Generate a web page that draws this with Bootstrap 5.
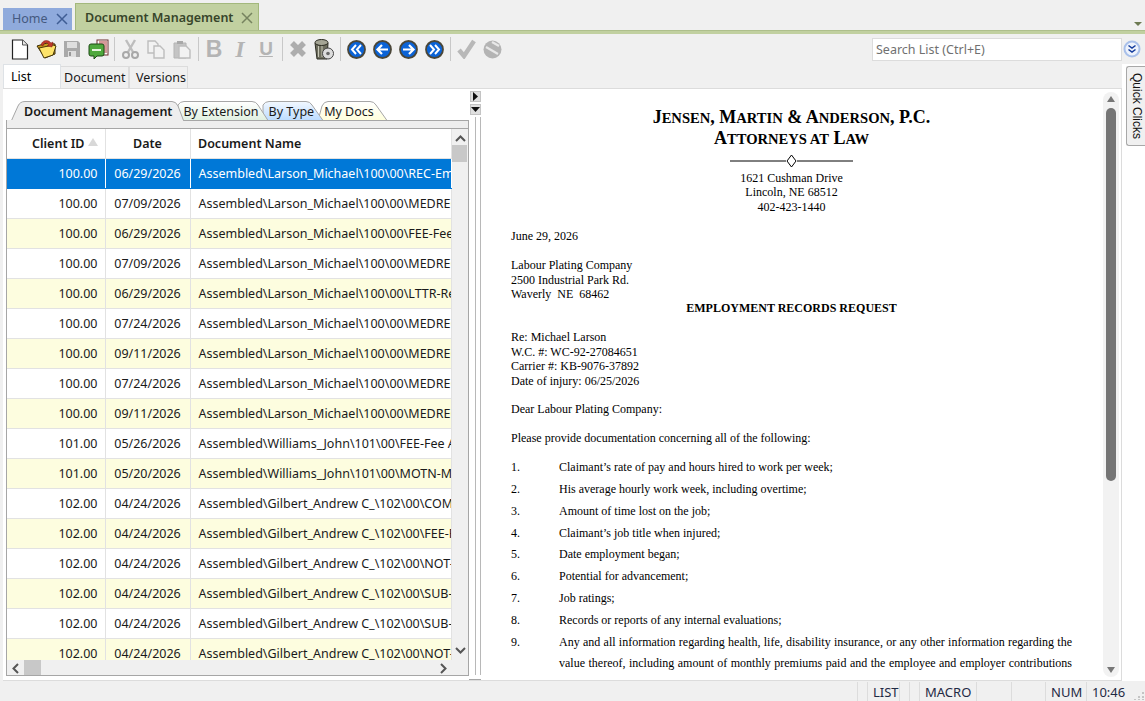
<!DOCTYPE html>
<html lang="en">

<head>
    <meta charset="UTF-8">
    <meta name="viewport" content="width=device-width, initial-scale=1.0">
    <title>Document Management</title>

    <link href="https://cdn.jsdelivr.net/npm/bootstrap@5.3.0/dist/css/bootstrap.min.css" rel="stylesheet">

    <style>
        html, body { height: 100%; }

        body {
            background-color: #f0f0f0;
            font-family: "Noto Sans", "Open Sans", sans-serif;
            font-size: 12.5px;
            color: #1a1a1a;
            overflow: hidden;
        }

        /* top window tabs */
        .top-tabs { height: 30px; padding-left: 3px; }
        .top-tab { display: flex; align-items: center; height: 22px; padding-left: 9px; width: 69px; flex: none; white-space: nowrap; background-color: #8faadc; color: #44597f; }
        .top-tab svg { margin-left: 8px; flex: none; }
        .top-tab.active { height: 27px; width: 184px; margin-left: 3px; padding-top: 2px; background-color: #c1d0a0; border: 1px solid #a3b87c; border-bottom: 0; color: #37452a; font-weight: 600; }
        .top-rule { height: 4px; background-color: #c1d0a0; border-top: 1px solid #aebf8c; }
        .tab-menu { width: 0; height: 0; margin: 0 3px 4px 0; border-left: 4px solid transparent; border-right: 4px solid transparent; border-top: 4px solid #6d7a52; }

        /* toolbar */
        .toolbar { height: 30px; padding-left: 7px; }
        .tool { width: 26px; height: 26px; flex: none; display: flex; align-items: center; justify-content: center; }
        .tool.glyph { font-family: "Liberation Sans", sans-serif; font-size: 23px; font-weight: 700; color: #b4b4b4; }
        .tool.glyph.u { text-decoration: underline; font-size: 19px; }
        .tool.glyph.i { font-family: "Liberation Serif", serif; font-style: italic; font-size: 24px; }
        .sep { width: 1px; height: 24px; flex: none; margin: 0 2px 0 3px; background-color: #c8c8c8; }
        .search-box { width: 250px; height: 23px; flex: none; margin-right: 23px; padding: 0 3px; border-radius: 0; border: 1px solid #dcdcdc; font-size: 12.5px; font-family: inherit; }
        .search-box::placeholder { color: #707070; }
        .search-more { position: absolute; right: 4px; top: 6px; }

        /* List / Document / Versions */
        .sub-tabs { height: 24px; padding-left: 3px; border: 0; gap: 0; }
        .sub-tabs .nav-link { height: 22px; margin: 2px 0 0 0; padding: 0 0 0 3px; line-height: 21px; color: #1a1a1a; background-color: #f0f0f0; border: 1px solid #dcdcdc; border-bottom: 0; border-radius: 0; }
        .sub-tabs .nav-link.active { height: 24px; width: 58px; margin-top: 0; padding: 0 0 0 7px; line-height: 23px; background-color: #fff; }
        .sub-tabs .nav-item + .nav-item .nav-link { border-left: 0; }
        .sub-tabs .nav-item:nth-child(2) .nav-link { width: 68px; }
        .sub-tabs .nav-item:nth-child(3) .nav-link { width: 59px; padding-left: 6px; border-left: 1px solid #dcdcdc; }

        .workspace { height: 617px; }
        .main-pane { height: 593px; margin-left: 3px; width: 1119px; background-color: #fff; border-top: 1px solid #dcdcdc; border-bottom: 1px solid #dcdcdc; border-right: 1px solid #dcdcdc; }
        .right-rail { width: 23px; background-color: #fff; padding: 2px 0 0 4px; }
        .quick-clicks { height: 80px; width: 19px; writing-mode: vertical-rl; background-color: #f0f0f0; border: 1px solid #a8a8a8; border-right: 0; border-radius: 3px 0 0 3px; font-family: "Liberation Sans", sans-serif; font-size: 12px; line-height: 17px; text-align: center; color: #111; }

        /* left list pane */
        .list-pane { width: 463px; margin-left: 3px; padding-top: 12px; }
        .doc-strip { position: relative; height: 19px; padding-left: 18px; gap: 10px; }
        .doc-strip svg { position: absolute; left: 0; top: 0; }
        .doc-strip span { position: relative; line-height: 21px; white-space: nowrap; }
        .doc-strip .on { font-weight: 600; margin-right: 1px; }
        .strip-band { height: 8px; background-color: #eee; border: 1px solid #a6a6a6; border-width: 1px 1px 0 1px; }
        .grid-frame { height: 548px; border: 1px solid #a6a6a6; }
        .grid-view { width: 445px; height: 531px; overflow: hidden; }
        .grid { table-layout: fixed; width: 445px; margin: 0; border-color: #e2e2e2; font-size: 12.5px; }
        .grid th, .grid td { height: 30px; padding: 2px 7px 0; vertical-align: middle; white-space: nowrap; overflow: hidden; color: #1a1a1a; border-width: 0 1px 1px 0; border-color: #e2e2e2; }
        .grid td:nth-child(3) { padding-left: 8px; }
        .grid th:nth-child(3) { padding-left: 7.5px; }
        .grid th { height: 29px; font-weight: 600; }
        .grid .sort { display: inline-block; width: 0; height: 0; margin-left: 3px; vertical-align: 2px; border-left: 5px solid transparent; border-right: 5px solid transparent; border-bottom: 8px solid #d8d8d8; }
        .grid tr.alt td { background-color: #fdfddf; }
        .grid tr.sel td { background-color: #0078d7; color: #fff; border-color: #fff; border-bottom-color: #0078d7; }
        .vbar { width: 16px; background-color: #f0f0f0; padding-top: 16px; }
        .vbar i { display: block; width: 15px; height: 17px; background-color: #c8c8c8; }
        .hbar { height: 16px; background-color: #f0f0f0; padding-left: 17px; }
        .hbar i { display: block; width: 17px; height: 15px; background-color: #c8c8c8; }
        .hbar svg, .vbar svg { position: absolute; }

        /* splitter between list and preview */
        .splitter { position: relative; width: 12px; border-bottom: 1px solid #a6a6a6; padding-top: 2px; }
        .split-btn { display: flex; align-items: center; justify-content: center; width: 11px; height: 11px; margin: 0 0 2px 1px; background-color: #e0e0e0; border: 1px solid #c4c4c4; }
        .split-lines { width: 6px; height: 558px; margin-left: 6px; border: 1px solid #b8b8b8; border-width: 0 1px; }

        /* letter preview */
        .preview { flex: 1; padding: 18px 0 0 30px; overflow: hidden; height: 591px; font-family: "Liberation Serif", serif; font-size: 12px; line-height: 14.5px; color: #000; }
        .letter { width: 561px; flex: none; }
        .letter p { margin: 0 0 14.25px; }
        .firm { font-size: 18px; line-height: 20px; font-weight: 700; text-align: center; white-space: nowrap; }
        .firm span { font-size: .81em; text-transform: uppercase; }
        .firm-rule { display: block; margin: 4px auto 1.75px; }
        .letter .address { margin-bottom: 15px; }
        .letter .heading { margin-top: -.5px; margin-bottom: 14.75px; }
        .letter .dear { margin-top: -.5px; margin-bottom: 14.75px; }
        .letter ol { list-style: none; margin: 11.5px 0 0; padding: 0; line-height: 21.8px; }
        .letter li { display: flex; }
        .letter li span { width: 48px; flex: none; }
        .letter li div { width: 513px; text-align: justify; text-align-last: justify; }
        .doc-scroll { position: relative; width: 16px; height: 585px; margin: -15.5px 0 0 31px; background-color: #f2f2f2; border-radius: 8px; flex: none; }
        .doc-scroll .thumb { position: absolute; left: 3px; top: 16px; width: 10px; height: 373px; background-color: #757575; border-radius: 5px; }
        .doc-scroll svg { position: absolute; left: 4px; }

        /* status bar */
        .status-bar { height: 20px; justify-content: flex-end; padding-top: 1px; color: #1f2a44; font-size: 13px; position: relative; }
        .status-bar div { height: 19px; line-height: 21px; padding-left: 5px; border-left: 1px solid #dcdcdc; }
        .status-bar svg { position: absolute; right: 1px; bottom: 1px; }
    </style>
</head>

<body class="d-flex flex-column">

    <div class="top-tabs d-flex align-items-end">
        <div class="top-tab">Home
            <svg width="12" height="12" viewBox="0 0 12 12"><path d="M1 1l10 10M11 1L1 11" stroke="#3f5d94" stroke-width="1.5" fill="none"/></svg>
        </div>
        <div class="top-tab active">Document Management
            <svg width="12" height="12" viewBox="0 0 12 12"><path d="M1 1l10 10M11 1L1 11" stroke="#76835f" stroke-width="1.5" fill="none"/></svg>
        </div>
        <div class="ms-auto tab-menu"></div>
    </div>
    <div class="top-rule"></div>

    <div class="toolbar d-flex align-items-center position-relative">
        <span class="tool"><svg width="18" height="21" viewBox="0 0 18 21"><path d="M1.500 1h10l5 5v14h-15z" fill="#fff" stroke="#222" stroke-width="1.2"/><path d="M11.500 1v5h5" fill="#e8e8e8" stroke="#555"/></svg></span>
        <span class="tool"><svg width="21" height="20" viewBox="0 0 21 20"><path d="M1 7l10-3 8 1v10l-10 4z" fill="#c79a1e" stroke="#3a2c08"/><path d="M3 9l14-3 3 1-3 9-9 3z" fill="#fde36a" stroke="#4a3a0a"/><path d="M5 6C6 1 12 0 15 4l2-1-1 5-5-1 2-1C11 3 8 3 7 7z" fill="#c0392b" stroke="#7a1c12" stroke-width=".5"/></svg></span>
        <span class="tool"><svg width="18" height="18" viewBox="0 0 18 18"><path d="M1 1h14l2 2v14H1z" fill="#a9a9a9"/><rect x="4" y="2" width="10" height="6" fill="#dedede"/><rect x="5" y="11" width="8" height="6" fill="#dedede"/><rect x="6" y="12" width="2" height="4" fill="#999"/></svg></span>
        <span class="tool"><svg width="21" height="21" viewBox="0 0 21 21"><rect x="9" y="1" width="11" height="15" fill="#fff" stroke="#6b2c2c"/><path d="M11 3h8M11 5h8M11 7h8M11 9h8M11 11h8M11 13h8" stroke="#a33"/><path d="M3 5h11a2 2 0 0 1 2 2v8a2 2 0 0 1-2 2H9l-3 3v-3H3a2 2 0 0 1-2-2V7a2 2 0 0 1 2-2z" fill="#4fa83d" stroke="#1d4a15"/><rect x="4" y="10" width="9" height="2" fill="#e8f5e0"/></svg></span>
        <span class="sep"></span>
        <span class="tool"><svg width="17" height="20" viewBox="0 0 17 20"><path d="M4 1l7 12M13 1L6 13" stroke="#bdbdbd" stroke-width="2.400" fill="none"/><circle cx="4" cy="16" r="3" fill="none" stroke="#a8a8a8" stroke-width="2"/><circle cx="13" cy="16" r="3" fill="none" stroke="#a8a8a8" stroke-width="2"/></svg></span>
        <span class="tool"><svg width="18" height="19" viewBox="0 0 18 19"><path d="M1 1h7l3 3v9H1z" fill="#f2f2f2" stroke="#bdbdbd" stroke-width="1.400"/><path d="M7 6h6l4 4v8H7z" fill="#f2f2f2" stroke="#bdbdbd" stroke-width="1.400"/></svg></span>
        <span class="tool"><svg width="18" height="19" viewBox="0 0 18 19"><path d="M1 3h12v15H1z" fill="#c4c4c4" stroke="#b4b4b4"/><rect x="4" y="1" width="6" height="3" fill="#a8a8a8"/><path d="M6 6h7l4 4v8H6z" fill="#f2f2f2" stroke="#bdbdbd" stroke-width="1.400"/></svg></span>
        <span class="sep"></span>
        <span class="tool glyph">B</span>
        <span class="tool glyph i">I</span>
        <span class="tool glyph u">U</span>
        <span class="sep"></span>
        <span class="tool"><svg width="18" height="18" viewBox="0 0 18 18"><path d="M3 3l12 12M15 3L3 15" stroke="#adadad" stroke-width="5.500" fill="none"/></svg></span>
        <span class="tool"><svg width="20" height="21" viewBox="0 0 20 21"><path d="M1 4h13l-1 16H3z" fill="#6e6e5e" stroke="#2c2c22"/><ellipse cx="7.500" cy="3.500" rx="6.500" ry="3" fill="#a5a595" stroke="#2c2c22"/><path d="M4.500 7v11M8 7v11" stroke="#c8c8b8"/><circle cx="14" cy="14.500" r="5.500" fill="#dcdcdc" stroke="#444"/><circle cx="14" cy="14.500" r="1.800" fill="#666"/></svg></span>
        <span class="sep"></span>
        <span class="tool"><svg width="19" height="19" viewBox="0 0 19 19"><circle cx="9.500" cy="9.500" r="8.500" fill="#0b63d6" stroke="#4a4638" stroke-width="1.800"/><path d="M9 5L5 9.500 9 14M14 5l-4 4.500 4 4.500" fill="none" stroke="#fff" stroke-width="2"/></svg></span>
        <span class="tool"><svg width="19" height="19" viewBox="0 0 19 19"><circle cx="9.500" cy="9.500" r="8.500" fill="#0b63d6" stroke="#4a4638" stroke-width="1.800"/><path d="M9 5L4.500 9.500 9 14M5 9.500h10" fill="none" stroke="#fff" stroke-width="2.200"/></svg></span>
        <span class="tool"><svg width="19" height="19" viewBox="0 0 19 19"><circle cx="9.500" cy="9.500" r="8.500" fill="#0b63d6" stroke="#4a4638" stroke-width="1.800"/><path d="M10 5l4.500 4.500L10 14M4 9.500h10" fill="none" stroke="#fff" stroke-width="2.200"/></svg></span>
        <span class="tool"><svg width="19" height="19" viewBox="0 0 19 19"><circle cx="9.500" cy="9.500" r="8.500" fill="#0b63d6" stroke="#4a4638" stroke-width="1.800"/><path d="M5 5l4 4.500L5 14M10 5l4 4.500-4 4.500" fill="none" stroke="#fff" stroke-width="2"/></svg></span>
        <span class="sep"></span>
        <span class="tool"><svg width="19" height="20" viewBox="0 0 19 20"><path d="M2 11l5 6L17 2" fill="none" stroke="#b8b8b8" stroke-width="4.500"/></svg></span>
        <span class="tool"><svg width="19" height="19" viewBox="0 0 19 19"><circle cx="9.500" cy="9.500" r="9" fill="#b4b4b4"/><path d="M3 7l12 7M9 2l7 4" stroke="#e8e8e8" stroke-width="2.200" fill="none"/></svg></span>
        <input type="text" class="form-control search-box ms-auto" placeholder="Search List (Ctrl+E)">
        <svg class="search-more" width="18" height="18" viewBox="0 0 18 18"><circle cx="9" cy="9" r="7.500" fill="#eef3fc" stroke="#a9c0ea" stroke-width="2"/><path d="M5.500 5.500L9 8l3.500-2.500M5.500 9.500L9 12l3.500-2.500" fill="none" stroke="#123a9c" stroke-width="1.500"/></svg>
    </div>

    <div class="workspace d-flex">
        <div>
            <ul class="nav nav-tabs sub-tabs">
                <li class="nav-item"><a class="nav-link active" href="#">List</a></li>
                <li class="nav-item"><a class="nav-link" href="#">Document</a></li>
                <li class="nav-item"><a class="nav-link" href="#">Versions</a></li>
            </ul>

            <div class="main-pane d-flex">

                <div class="list-pane">
                    <div class="doc-strip d-flex">
                        <svg width="463" height="20" viewBox="0 0 463 20">
                            <defs>
                                <linearGradient id="tabGreen" x1="0" y1="0" x2="0" y2="1"><stop offset="0" stop-color="#fff"/><stop offset="1" stop-color="#e0f0e0"/></linearGradient>
                                <linearGradient id="tabBlue" x1="0" y1="0" x2="0" y2="1"><stop offset="0" stop-color="#f2f8ff"/><stop offset="1" stop-color="#bcdcff"/></linearGradient>
                                <linearGradient id="tabYellow" x1="0" y1="0" x2="0" y2="1"><stop offset="0" stop-color="#fff"/><stop offset="1" stop-color="#ffffdc"/></linearGradient>
                            </defs>
                            <path d="M312 19.500L316 5Q318 .5 322 .5H364Q368 .5 370 4L381 19.500z" fill="url(#tabYellow)" stroke="#a6a6a6"/>
                            <path d="M257 19.500V4Q259 .5 263 .5H300Q304 .5 306 4L317 19.500z" fill="url(#tabBlue)" stroke="#a6a6a6"/>
                            <path d="M172 19.500V4Q174 .5 178 .5H246Q250 .5 252 4L262 19.500z" fill="url(#tabGreen)" stroke="#a6a6a6"/>
                            <path d="M0 20V19.500H5.500L12 5Q14 .5 19 .5H166Q170 .5 172 5L177.500 19.500V20z" fill="#eee" stroke="#a6a6a6"/>
                            <rect x="1" y="19" width="176" height="2" fill="#eee"/>
                        </svg>
                        <span class="on">Document Management</span>
                        <span>By Extension</span>
                        <span>By Type</span>
                        <span>My Docs</span>
                    </div>
                    <div class="strip-band"></div>
                    <div class="grid-frame d-flex flex-column">
                        <div class="d-flex">
                            <div class="grid-view">
                                <table class="table grid">
                                    <colgroup><col style="width:98px"><col style="width:85px"><col></colgroup>
                                    <thead>
                                        <tr><th class="text-end">Client ID<span class="sort"></span></th><th class="text-center">Date</th><th>Document Name</th></tr>
                                    </thead>
                                    <tbody>
                                        <tr class="sel"><td class="text-end">100.00</td><td class="text-center">06/29/2026</td><td>Assembled\Larson_Michael\100\00\REC-Emp</td></tr>
                                        <tr><td class="text-end">100.00</td><td class="text-center">07/09/2026</td><td>Assembled\Larson_Michael\100\00\MEDREC</td></tr>
                                        <tr class="alt"><td class="text-end">100.00</td><td class="text-center">06/29/2026</td><td>Assembled\Larson_Michael\100\00\FEE-Fee</td></tr>
                                        <tr><td class="text-end">100.00</td><td class="text-center">07/09/2026</td><td>Assembled\Larson_Michael\100\00\MEDREC</td></tr>
                                        <tr class="alt"><td class="text-end">100.00</td><td class="text-center">06/29/2026</td><td>Assembled\Larson_Michael\100\00\LTTR-Re</td></tr>
                                        <tr><td class="text-end">100.00</td><td class="text-center">07/24/2026</td><td>Assembled\Larson_Michael\100\00\MEDREC</td></tr>
                                        <tr class="alt"><td class="text-end">100.00</td><td class="text-center">09/11/2026</td><td>Assembled\Larson_Michael\100\00\MEDREC</td></tr>
                                        <tr><td class="text-end">100.00</td><td class="text-center">07/24/2026</td><td>Assembled\Larson_Michael\100\00\MEDREC</td></tr>
                                        <tr class="alt"><td class="text-end">100.00</td><td class="text-center">09/11/2026</td><td>Assembled\Larson_Michael\100\00\MEDREC</td></tr>
                                        <tr><td class="text-end">101.00</td><td class="text-center">05/26/2026</td><td>Assembled\Williams_John\101\00\FEE-Fee A</td></tr>
                                        <tr class="alt"><td class="text-end">101.00</td><td class="text-center">05/20/2026</td><td>Assembled\Williams_John\101\00\MOTN-M</td></tr>
                                        <tr><td class="text-end">102.00</td><td class="text-center">04/24/2026</td><td>Assembled\Gilbert_Andrew C_\102\00\COMP</td></tr>
                                        <tr class="alt"><td class="text-end">102.00</td><td class="text-center">04/24/2026</td><td>Assembled\Gilbert_Andrew C_\102\00\FEE-F</td></tr>
                                        <tr><td class="text-end">102.00</td><td class="text-center">04/24/2026</td><td>Assembled\Gilbert_Andrew C_\102\00\NOT-N</td></tr>
                                        <tr class="alt"><td class="text-end">102.00</td><td class="text-center">04/24/2026</td><td>Assembled\Gilbert_Andrew C_\102\00\SUB-T</td></tr>
                                        <tr><td class="text-end">102.00</td><td class="text-center">04/24/2026</td><td>Assembled\Gilbert_Andrew C_\102\00\SUB-T</td></tr>
                                        <tr class="alt"><td class="text-end">102.00</td><td class="text-center">04/24/2026</td><td>Assembled\Gilbert_Andrew C_\102\00\NOT-N</td></tr>
                                    </tbody>
                                </table>
                            </div>
                            <div class="vbar position-relative">
                                <svg width="11" height="7" viewBox="0 0 11 7" style="left:3px;top:6px"><path d="M1 6l4.500-4.500L10 6" fill="none" stroke="#555" stroke-width="2"/></svg>
                                <i></i>
                                <svg width="11" height="7" viewBox="0 0 11 7" style="left:3px;top:518px"><path d="M1 1l4.500 4.500L10 1" fill="none" stroke="#555" stroke-width="2"/></svg>
                            </div>
                        </div>
                        <div class="hbar position-relative">
                            <svg width="7" height="11" viewBox="0 0 7 11" style="left:5px;top:3px"><path d="M6 1L1.500 5.500 6 10" fill="none" stroke="#555" stroke-width="2"/></svg>
                            <i></i>
                            <svg width="7" height="11" viewBox="0 0 7 11" style="left:433px;top:3px"><path d="M1 1l4.500 4.500L1 10" fill="none" stroke="#555" stroke-width="2"/></svg>
                        </div>
                    </div>
                </div>

                <div class="splitter">
                    <div class="split-btn"><svg width="5" height="9" viewBox="0 0 5 9"><path d="M0 0l5 4.500L0 9z" fill="#111"/></svg></div>
                    <div class="split-btn"><svg width="9" height="5" viewBox="0 0 9 5"><path d="M0 0h9L4.500 5z" fill="#111"/></svg></div>
                    <div class="split-lines"></div>
                </div>

                <div class="preview d-flex">
                    <div class="letter">
                        <div class="firm">J<span>ensen</span>, M<span>artin</span> &amp; A<span>nderson</span>, P.C.<br>A<span>ttorneys at</span> L<span>aw</span></div>
                        <svg class="firm-rule" width="123" height="16" viewBox="0 0 123 16"><path d="M0 8h56M67 8h56" stroke="#000"/><path d="M61.500 2l4.500 6-4.500 6-4.500-6z" fill="#fff" stroke="#000"/></svg>
                        <p class="text-center address">1621 Cushman Drive<br>Lincoln, NE 68512<br>402-423-1440</p>
                        <p>June 29, 2026</p>
                        <p class="mb-0">Labour Plating Company<br>2500 Industrial Park Rd.<br>Waverly&nbsp; NE&nbsp; 68462</p>
                        <p class="text-center fw-bold heading">EMPLOYMENT RECORDS REQUEST</p>
                        <p>Re: Michael Larson<br>W.C. #: WC-92-27084651<br>Carrier #: KB-9076-37892<br>Date of injury: 06/25/2026</p>
                        <p class="dear">Dear Labour Plating Company:</p>
                        <p class="mb-0">Please provide documentation concerning all of the following:</p>
                        <ol>
                            <li><span>1.</span>Claimant’s rate of pay and hours hired to work per week;</li>
                            <li><span>2.</span>His average hourly work week, including overtime;</li>
                            <li><span>3.</span>Amount of time lost on the job;</li>
                            <li><span>4.</span>Claimant’s job title when injured;</li>
                            <li><span>5.</span>Date employment began;</li>
                            <li><span>6.</span>Potential for advancement;</li>
                            <li><span>7.</span>Job ratings;</li>
                            <li><span>8.</span>Records or reports of any internal evaluations;</li>
                            <li><span>9.</span><div>Any and all information regarding health, life, disability insurance, or any other information regarding the value thereof, including amount of monthly premiums paid and the employee and employer contributions</div></li>
                        </ol>
                    </div>
                    <div class="doc-scroll">
                        <svg width="8" height="6" viewBox="0 0 8 6" style="top:4px"><path d="M0 6l4-6 4 6z" fill="#777"/></svg>
                        <div class="thumb"></div>
                        <svg width="8" height="6" viewBox="0 0 8 6" style="bottom:4px"><path d="M0 0h8L4 6z" fill="#777"/></svg>
                    </div>
                </div>
            </div>
        </div>

        <div class="right-rail">
            <div class="quick-clicks">Quick Clicks</div>
        </div>
    </div>

    <div class="status-bar d-flex">
        <div style="width:10px"></div>
        <div style="width:32px">LIST</div>
        <div style="width:10px"></div>
        <div style="width:10px"></div>
        <div style="width:57px">MACRO</div>
        <div style="width:35px"></div>
        <div style="width:34px"></div>
        <div style="width:41px">NUM</div>
        <div style="width:59px">10:46</div>
        <svg width="10" height="10" viewBox="0 0 10 10"><path d="M8 2h2v2H8zM4 6h2v2H4zM8 6h2v2H8zM0 9h2v1H0zM4 9h2v1H4zM8 9h2v1H8z" fill="#c4c4c4"/></svg>
    </div>

    <script src="https://cdn.jsdelivr.net/npm/bootstrap@5.3.0/dist/js/bootstrap.bundle.min.js"></script>
</body>

</html>
